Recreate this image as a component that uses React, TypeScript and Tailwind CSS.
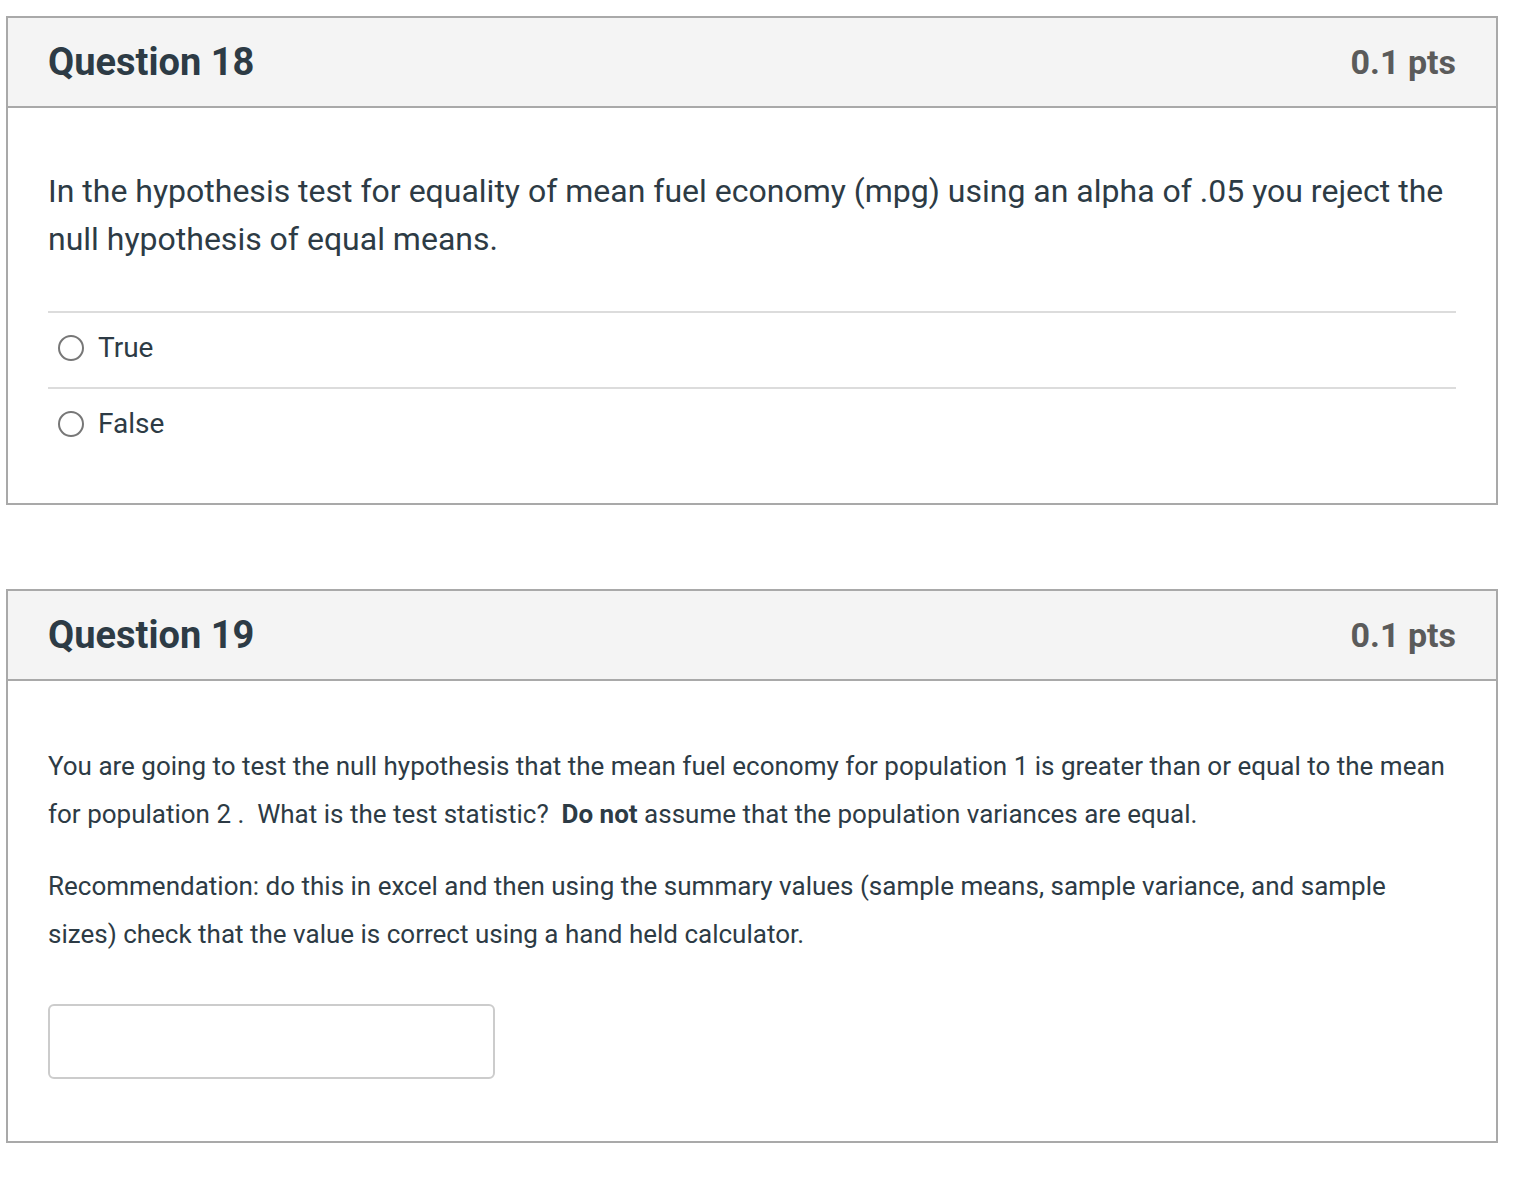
import React from 'react';

const font = { fontFamily: 'Roboto, "Liberation Sans", sans-serif' };

function Header({ title }: { title: string }) {
  return (
    <div className="flex h-[90px] items-center justify-between border-b-2 border-[#a9a9a9] bg-[#f4f4f4] px-[40px]">
      <h2 className="text-[38px] font-bold text-[#2d3b45]">{title}</h2>
      <span className="text-[34px] font-bold text-[#5b5b5b]">0.1 pts</span>
    </div>
  );
}

function Radio({ label, divider }: { label: string; divider: boolean }) {
  return (
    <div
      className={`flex items-center gap-[14px] pb-[4px] pl-[10px] ${
        divider ? 'h-[76px] border-t-2 border-[#dcdcdc]' : 'h-[74px]'
      }`}
    >
      <span className="h-[26px] w-[26px] rounded-full border-2 border-[#777777] bg-white" />
      <span className="text-[28px] text-[#2d3b45]">{label}</span>
    </div>
  );
}

export default function App() {
  return (
    <div className="min-h-[1192px] bg-white pt-[16px] pl-[6px]" style={font}>
      <div className="w-[1492px] border-2 border-[#a9a9a9]">
        <Header title="Question 18" />
        <div className="px-[40px] pt-[59px] pb-[40px]">
          <p className="text-[32px] leading-[48px] text-[#2d3b45]">
            In the hypothesis test for equality of mean fuel economy (mpg) using an alpha of .05 you reject the null
            hypothesis of equal means.
          </p>
          <div className="mt-[48px] border-t-2 border-[#dcdcdc]">
            <Radio label="True" divider={false} />
            <Radio label="False" divider />
          </div>
        </div>
      </div>

      <div className="mt-[84px] w-[1492px] border-2 border-[#a9a9a9]">
        <Header title="Question 19" />
        <div className="px-[40px] pt-[61px] pb-[62px]">
          <p className="text-[26px] leading-[48px] text-[#2d3b45]">
            You are going to test the null hypothesis that the mean fuel economy for population 1 is greater than or
            equal to the mean for population 2 .&nbsp; What is the test statistic?&nbsp; <b>Do not</b> assume that the
            population variances are equal.
          </p>
          <p className="mt-[24px] text-[26px] leading-[48px] text-[#2d3b45]">
            Recommendation: do this in excel and then using the summary values (sample means, sample variance, and
            sample sizes) check that the value is correct using a hand held calculator.
          </p>
          <input
            type="text"
            className="mt-[46px] block h-[75px] w-[447px] rounded-[6px] border-2 border-[#cccccc] bg-white"
          />
        </div>
      </div>
    </div>
  );
}
